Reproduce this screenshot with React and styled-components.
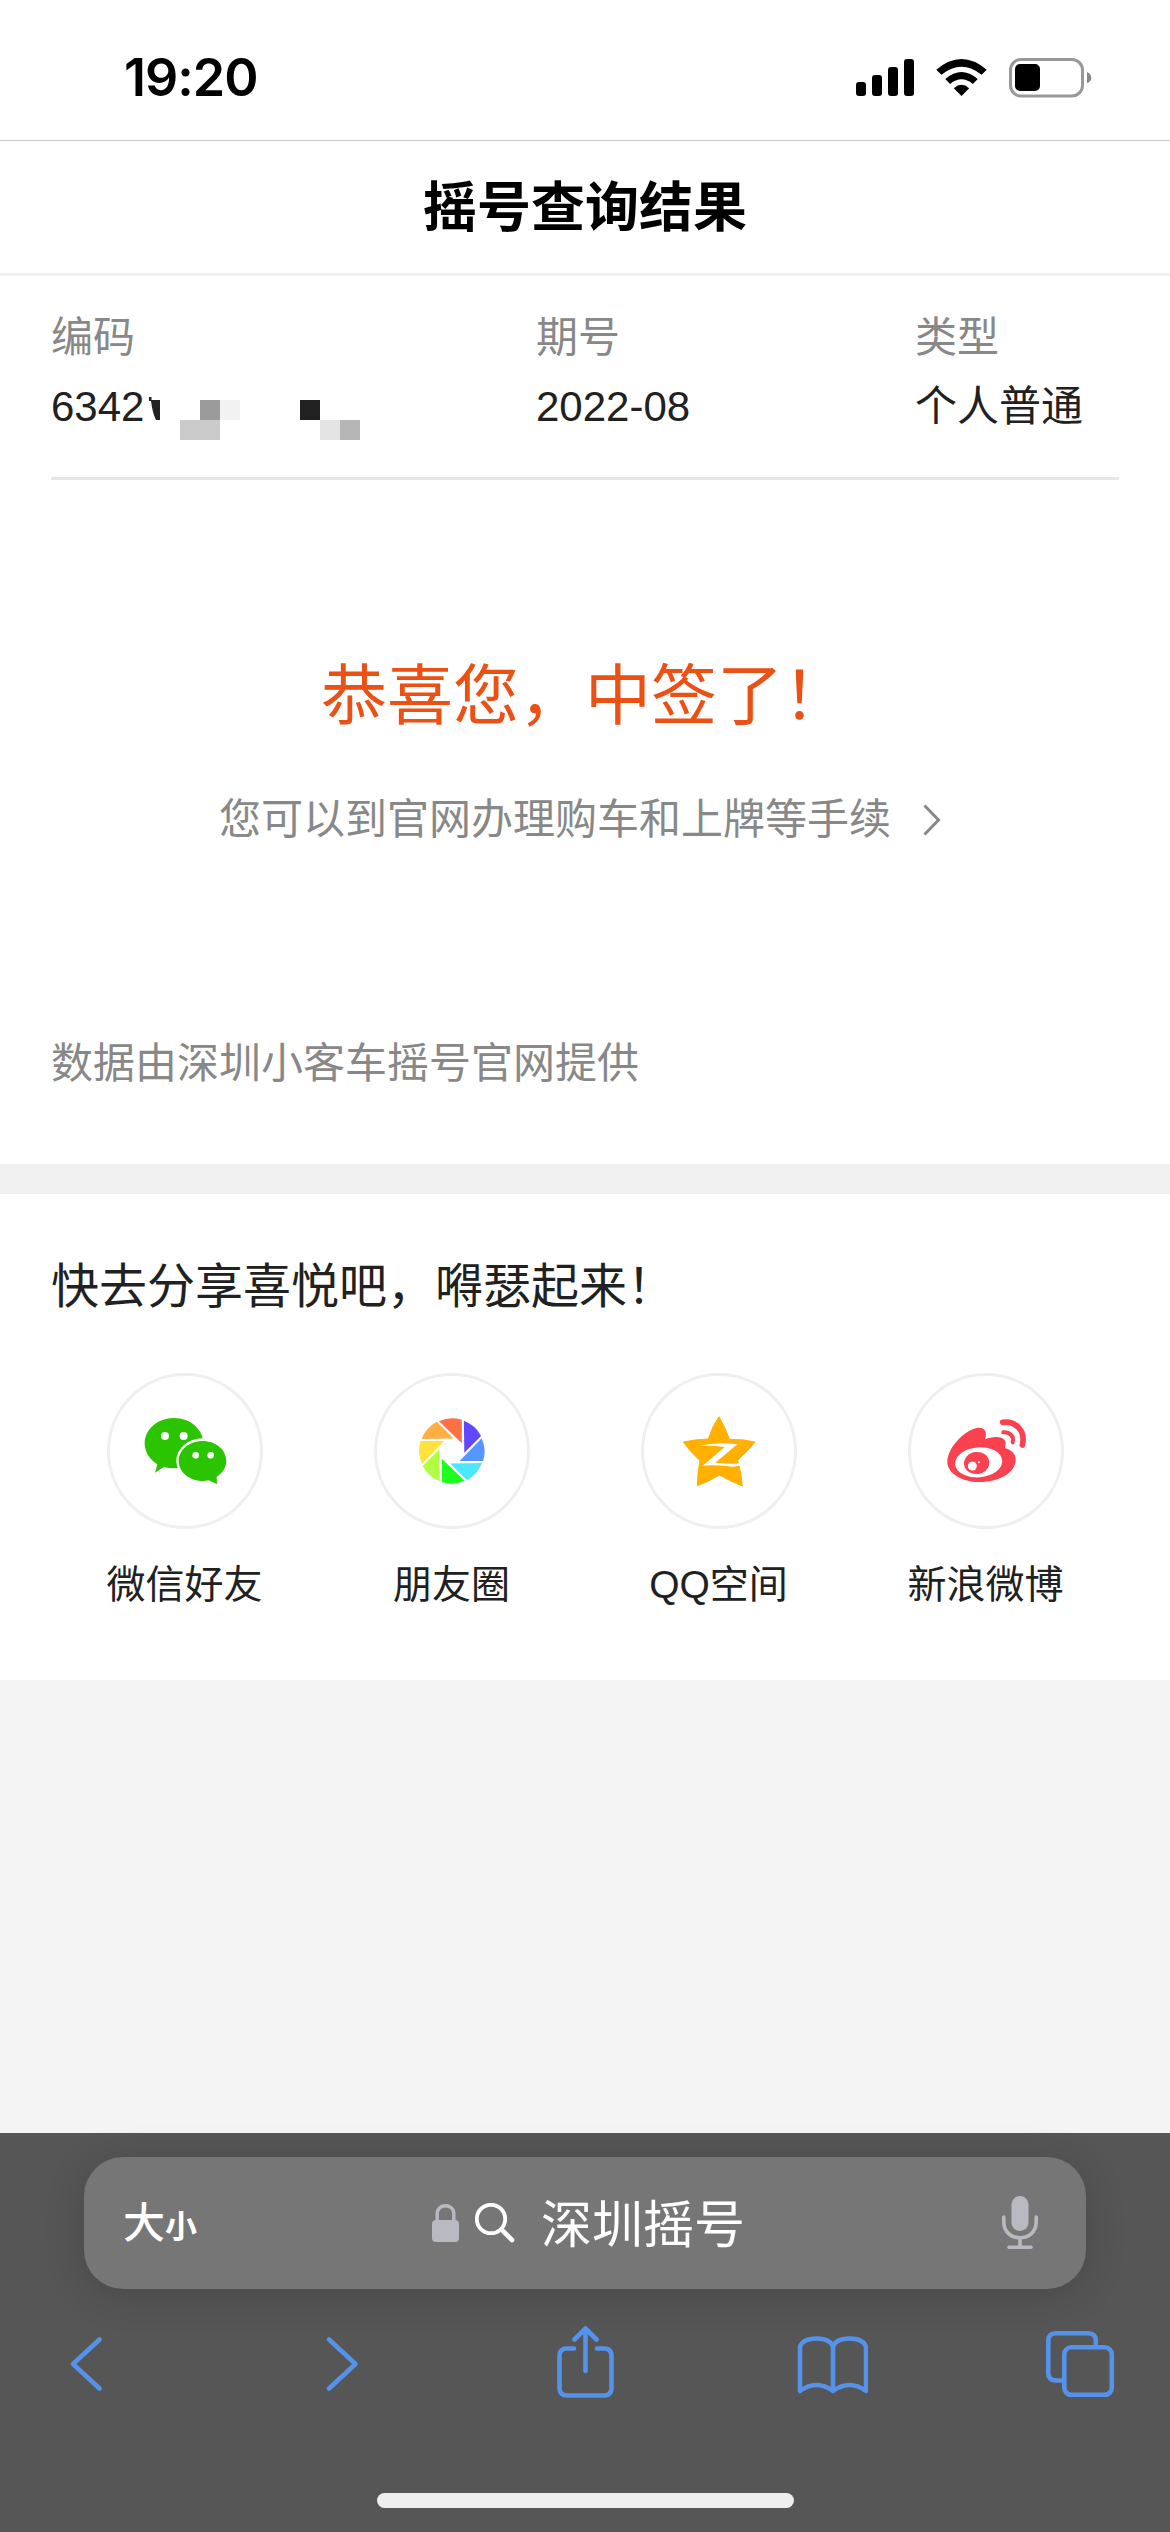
import React from "react";
import styled, { createGlobalStyle } from "styled-components";

const sans = `"Liberation Sans", "Noto Sans CJK SC", sans-serif`;

const GlobalStyle = createGlobalStyle`
  * { box-sizing: border-box; }
  body { margin: 0; background: #f4f4f4; font-family: ${sans}; }
  svg { display: block; flex: none; }
`;

const Screen = styled.div`
  width: 1170px;
  height: 2532px;
  display: flex;
  flex-direction: column;
  overflow: hidden;
  background: #f4f4f4;
  color: #212121;
`;

const StatusBar = styled.header`
  height: 141px;
  flex: none;
  display: flex;
  justify-content: space-between;
  padding: 58px 78px 0 124px;
  background: #fff;
  border-bottom: 1px solid #c6c6c6;
`;

const Clock = styled.time`
  font: 600 52px/40px Inter, sans-serif;
  letter-spacing: -1px;
  color: #000;
`;

const StatusIcons = styled.div`
  display: flex;
  gap: 22px;
`;

const TitleBar = styled.div`
  height: 135px;
  flex: none;
  display: flex;
  align-items: center;
  justify-content: center;
  padding-bottom: 6px;
  background: #fff;
  border-bottom: 3px solid #f0f0f0;
`;

const Title = styled.h1`
  margin: 0;
  font: 700 54px/60px "Noto Sans CJK SC", sans-serif;
  color: #000;
`;

const Result = styled.section`
  height: 888px;
  flex: none;
  padding: 0 51px;
  background: #fff;
  display: flex;
  flex-direction: column;
`;

const Facts = styled.dl`
  margin: 0;
  height: 204px;
  flex: none;
  padding-top: 32px;
  display: grid;
  grid-template-columns: 485px 379px 1fr;
  border-bottom: 3px solid #e6e6e6;
`;

const Fact = styled.div`
  font-size: 42px;
  line-height: 60px;
`;

const FactLabel = styled.dt`
  height: 69px;
  color: #888;
`;

const FactValue = styled.dd`
  margin: 0;
  height: 60px;
  display: flex;
  white-space: nowrap;
`;

const Headline = styled.h2`
  margin: 170px 0 0;
  text-align: center;
  font: 400 66px/80px "Noto Sans CJK SC", sans-serif;
  color: #eb5014;
`;

const GuideLink = styled.a`
  margin-top: 60px;
  padding-left: 168px;
  display: flex;
  align-items: center;
  gap: 32px;
  font-size: 42px;
  line-height: 60px;
  color: #888;
`;

const Source = styled.p`
  margin: 184px 0 0;
  font-size: 42px;
  line-height: 60px;
  color: #888;
`;

const Share = styled.section`
  height: 516px;
  flex: none;
  padding: 58px 51px 0;
  background: #fff;
  border-top: 30px solid #f0f0f0;
`;

const ShareTitle = styled.h3`
  margin: 0 0 61px;
  font: 400 48px/60px "Noto Sans CJK SC", sans-serif;
`;

const ShareList = styled.div`
  display: grid;
  grid-template-columns: repeat(4, 1fr);
`;

const ShareItem = styled.button`
  padding: 0;
  border: 0;
  background: none;
  color: inherit;
  display: flex;
  flex-direction: column;
  align-items: center;
  gap: 27px;
  font: 400 39px/58px ${sans};
`;

const Disc = styled.span`
  width: 156px;
  height: 156px;
  display: block;
  border: 3px solid #efefef;
  border-radius: 50%;
`;

const Browser = styled.footer`
  height: 399px;
  flex: none;
  margin-top: auto;
  padding-top: 24px;
  background: #565656;
  display: flex;
  flex-direction: column;
  align-items: center;
`;

const AddressBar = styled.div`
  width: 1002px;
  height: 132px;
  flex: none;
  padding: 0 48px 0 39px;
  display: flex;
  align-items: center;
  border-radius: 39px;
  background: #767676;
  box-shadow: 0 6px 40px rgba(0, 0, 0, 0.16);
  color: #fff;
`;

const TextSize = styled.span`
  width: 309px;
  padding-bottom: 2px;
  display: flex;
  align-items: baseline;
  font: 500 42px/60px "Noto Sans CJK SC", sans-serif;
  small { font-size: 32px; font-weight: 700; }
`;

const Query = styled.span`
  flex: 1;
  margin-left: 26px;
  padding-bottom: 4px;
  font: 400 51px/70px "Noto Sans CJK SC", sans-serif;
`;

const Tools = styled.nav`
  width: 1170px;
  height: 72px;
  flex: none;
  margin-top: 37px;
  padding: 0 54px 0 50px;
  display: flex;
  align-items: center;
  justify-content: space-between;
`;

const HomeIndicator = styled.div`
  width: 417px;
  height: 15px;
  margin-top: 95px;
  flex: none;
  border-radius: 8px;
  background: #eee;
`;

const SignalIcon = () => (
  <svg width="58" height="40" viewBox="856 58 58 40">
    <rect x="856" y="82" width="10" height="14" rx="3" />
    <rect x="872" y="75" width="10" height="21" rx="3" />
    <rect x="888" y="67" width="10" height="29" rx="3" />
    <rect x="904" y="59" width="10" height="37" rx="3" />
  </svg>
);

const WifiIcon = () => (
  <svg width="51" height="40" viewBox="936 58 51 40">
    <path d="M936.3 69.7Q961.5 48.3 986.7 69.7L981.6 74.8Q961.5 58.7 941.4 74.8Z" />
    <path d="M945.3 79Q961.5 65 977.7 79L972.9 83.9Q961.5 74.8 950.1 83.9Z" />
    <path d="M953.8 88.2Q961.5 81.4 969.2 88.2L961.5 96Z" />
  </svg>
);

const BatteryIcon = () => (
  <svg width="83" height="40" viewBox="1009 58 83 40">
    <rect x="1010.5" y="59.5" width="72" height="36.5" rx="10.5" fill="none" stroke="#999" strokeWidth="3" />
    <rect x="1015" y="64" width="25" height="27" rx="5" />
    <path d="M1087 72Q1091.3 74 1091.3 77.7T1087 83.3Z" fill="#888" />
  </svg>
);

const CodeMosaic = () => (
  <svg width="217" height="60" viewBox="144 377 217 60" overflow="visible">
    <path d="M149 397H151.500V400H160V420H156Q152.500 413 151 401H149Z" fill="#212121" />
    <rect x="200" y="400" width="20" height="20" fill="#9b9b9b" />
    <rect x="220" y="400" width="20" height="20" fill="#f2f2f2" />
    <rect x="180" y="420" width="40" height="20" fill="#cbcbcb" />
    <rect x="300" y="400" width="20" height="20" fill="#212121" />
    <rect x="320" y="420" width="20" height="20" fill="#e4e4e4" />
    <rect x="340" y="420" width="20" height="20" fill="#b6b6b6" />
  </svg>
);

const ArrowIcon = () => (
  <svg width="18" height="32" viewBox="0 0 18 32" fill="none" stroke="#888" strokeWidth="3">
    <path d="M1.500 1.500L15.500 16L1.500 30.500" />
  </svg>
);

const WechatIcon = () => (
  <svg width="150" height="150" viewBox="90 78 450 450" fill="#2bc400">
    <path d="M282 204C331 204 370 238 370 280S331 355 282 355Q266 355 252 351L225 368L232 343C209 329 194 306 194 280C194 238 233 204 282 204Z" />
    <ellipse cx="368" cy="333" rx="79" ry="68" fill="#fff" />
    <path d="M368 273C408 273 439 300 439 333Q439 360 410 381L411 402L385 391Q377 393 368 393C328 393 296 366 296 333S328 273 368 273Z" />
    <g fill="#fff">
      <circle cx="255" cy="258" r="12" />
      <circle cx="311" cy="258" r="12" />
      <circle cx="347" cy="316" r="10" />
      <circle cx="392" cy="316" r="10" />
    </g>
  </svg>
);

const blades = ["#ff7043", "#6147ff", "#5597ff", "#4be8fb", "#1fff1f", "#b0ff42", "#ffe23c", "#ffae42"];

const MomentsIcon = () => (
  <svg width="150" height="150" viewBox="892 78 450 450">
    <g transform="translate(1116.500 303)">
      {blades.map((color, i) => (
        <path key={color} d="M-38.500 -89.500A98 98 0 0 1 30 -94V-23Z" fill={color} transform={`rotate(${i * 45})`} />
      ))}
    </g>
  </svg>
);

const QzoneIcon = () => (
  <svg width="150" height="150" viewBox="132 78 450 450">
    <path
      d="M357 200Q375 230 388 268Q430 267 465 276Q444 303 413 331Q424 368 427 408Q390 393 358 375Q325 396 292 407Q292 370 300 332Q270 305 250 276Q286 268 325 267Q337 228 357 200Z"
      fill="#ffb000"
      stroke="#ffb000"
      strokeWidth="3"
      strokeLinejoin="round"
    />
    <path d="M298 288Q350 275 412 283L346 338Q390 344 429 339Q414 354 384 349Q345 344 308 347L374 291Q335 286 298 288Z" fill="#fff" />
  </svg>
);

const WeiboIcon = () => (
  <svg width="150" height="150" viewBox="933 78 450 450" fill="#fa4150">
    <path d="M1042 335C1043 297 1082 251 1122 236C1150 227 1165 243 1155 268C1174 261 1201 257 1213 269C1221 278 1213 288 1216 295C1236 301 1247 311 1247 330C1246 370 1195 396 1140 396C1085 396 1042 370 1042 335Z" />
    <ellipse cx="1136" cy="337" rx="71" ry="45" fill="#fff" transform="rotate(-5 1136 337)" />
    <ellipse cx="1130" cy="339" rx="38" ry="33" transform="rotate(-8 1130 339)" />
    <circle cx="1117" cy="348" r="13.500" fill="#fff" />
    <circle cx="1137" cy="337" r="3" fill="#fff" />
    <g fill="none" stroke="#fa4150" strokeLinecap="round">
      <path d="M1208 217C1246 211 1278 243 1267 285" strokeWidth="17" />
      <path d="M1210 247C1229 246 1243 259 1238 277" strokeWidth="12" />
    </g>
  </svg>
);

const LockIcon = () => (
  <svg width="27" height="38" viewBox="432 2205 27 38">
    <path d="M437.200 2223V2214.500C437.200 2204.200 453.800 2204.200 453.800 2214.500V2223" fill="none" stroke="#b9b9c1" strokeWidth="3.400" />
    <rect x="432" y="2221" width="27" height="22" rx="4" fill="#b9b9c1" />
  </svg>
);

const SearchSvg = styled.svg`
  margin-left: 16px;
`;

const SearchIcon = () => (
  <SearchSvg width="40" height="40" viewBox="475 2204 40 40" fill="none" stroke="#fff" strokeWidth="3.800" strokeLinecap="round">
    <circle cx="491" cy="2220" r="14.200" />
    <path d="M501.500 2230.500L512 2241" strokeWidth="4.600" />
  </SearchSvg>
);

const MicIcon = () => (
  <svg width="36" height="54" viewBox="1002 2196 36 54" fill="none" stroke="#b9b9c1" strokeWidth="3.600" strokeLinecap="round">
    <rect x="1011.500" y="2196" width="17" height="35" rx="8.500" fill="#b9b9c1" stroke="none" />
    <path d="M1003.800 2217V2222C1003.800 2243 1036.200 2243 1036.200 2222V2217M1020 2238V2247M1009 2247.200H1031" />
  </svg>
);

const ToolSvg = styled.svg.attrs({ width: 72, height: 72, fill: "none", strokeLinecap: "round", strokeLinejoin: "round" })`
  stroke: #5593ea;
  stroke-width: 4.6px;
`;

const shareTargets = [
  { name: "微信好友", Icon: WechatIcon },
  { name: "朋友圈", Icon: MomentsIcon },
  { name: "QQ空间", Icon: QzoneIcon },
  { name: "新浪微博", Icon: WeiboIcon },
];

export default function App() {
  return (
    <Screen>
      <GlobalStyle />
      <StatusBar>
        <Clock>19:20</Clock>
        <StatusIcons>
          <SignalIcon />
          <WifiIcon />
          <BatteryIcon />
        </StatusIcons>
      </StatusBar>
      <TitleBar>
        <Title>摇号查询结果</Title>
      </TitleBar>
      <Result>
        <Facts>
          <Fact>
            <FactLabel>编码</FactLabel>
            <FactValue>6342<CodeMosaic /></FactValue>
          </Fact>
          <Fact>
            <FactLabel>期号</FactLabel>
            <FactValue>2022-08</FactValue>
          </Fact>
          <Fact>
            <FactLabel>类型</FactLabel>
            <FactValue>个人普通</FactValue>
          </Fact>
        </Facts>
        <Headline>恭喜您，中签了！</Headline>
        <GuideLink>
          您可以到官网办理购车和上牌等手续
          <ArrowIcon />
        </GuideLink>
        <Source>数据由深圳小客车摇号官网提供</Source>
      </Result>
      <Share>
        <ShareTitle>快去分享喜悦吧，嘚瑟起来！</ShareTitle>
        <ShareList>
          {shareTargets.map(({ name, Icon }) => (
            <ShareItem key={name}>
              <Disc><Icon /></Disc>
              {name}
            </ShareItem>
          ))}
        </ShareList>
      </Share>
      <Browser>
        <AddressBar>
          <TextSize>大<small>小</small></TextSize>
          <LockIcon />
          <SearchIcon />
          <Query>深圳摇号</Query>
          <MicIcon />
        </AddressBar>
        <Tools>
          <ToolSvg viewBox="50 2326 72 72">
            <path d="M99.500 2339.500L73 2364L99.500 2388.500" />
          </ToolSvg>
          <ToolSvg viewBox="298.500 2326 72 72">
            <path d="M328.500 2339.500L355 2364L328.500 2388.500" />
          </ToolSvg>
          <ToolSvg viewBox="547 2326 72 72">
            <path d="M574 2348.500H567Q559.500 2348.500 559.500 2356V2388Q559.500 2395.500 567 2395.500H604Q611.500 2395.500 611.500 2388V2356Q611.500 2348.500 604 2348.500H597" />
            <path d="M585.500 2371V2329M574.500 2339.500L585.500 2328.500L596.500 2339.500" />
          </ToolSvg>
          <ToolSvg viewBox="795.500 2326 72 72">
            <path d="M832.500 2347V2391Q816 2379 799.500 2391V2347Q802 2338.500 816 2338.500T832.500 2347Q835 2338.500 849 2338.500T865.500 2347V2391Q849 2379 832.500 2391" />
          </ToolSvg>
          <ToolSvg viewBox="1044 2326 72 72">
            <rect x="1064.300" y="2347.300" width="47.500" height="47.500" rx="7" />
            <path d="M1064 2380.500H1056Q1048.300 2380.500 1048.300 2373V2341Q1048.300 2333.300 1056 2333.300H1088Q1095.800 2333.300 1095.800 2341V2347" />
          </ToolSvg>
        </Tools>
        <HomeIndicator />
      </Browser>
    </Screen>
  );
}
